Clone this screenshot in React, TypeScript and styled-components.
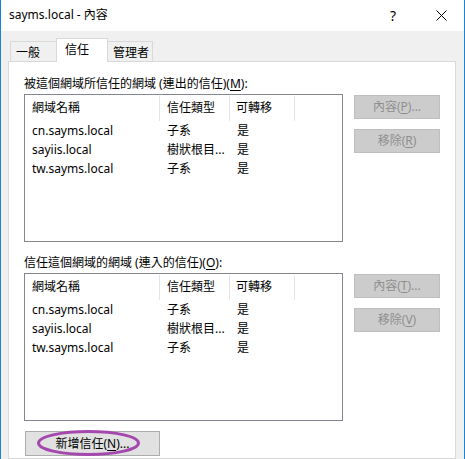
import React from "react";
import styled, { createGlobalStyle } from "styled-components";

const Global = createGlobalStyle`
  html, body { margin: 0; padding: 0; background: #ffffff; }
  body { font-family: "Noto Sans", "Noto Sans CJK TC", sans-serif; font-size: 12px; color: #000; }
  * { box-sizing: border-box; }
`;

const Window = styled.div`
  width: 465px;
  height: 459px;
  overflow: hidden;
  display: flex;
  flex-direction: column;
  border-left: 1px solid #1883d7;
  border-right: 1px solid #1883d7;
  background: #f0f0f0;
`;

const TitleBar = styled.div`
  height: 31px;
  flex: none;
  background: #ffffff;
  display: flex;
  align-items: center;
  padding-left: 8px;
`;

const TitleText = styled.div`
  flex: 1;
  font-size: 12px;
  line-height: 16px;
  margin-top: -1px;
`;

const TitleButton = styled.div<{ $w: number }>`
  width: ${(p) => p.$w}px;
  height: 31px;
  display: flex;
  align-items: center;
  justify-content: center;
  font-size: 14px;
  color: #000;
`;

const Body = styled.div`
  flex: 1;
  display: flex;
  flex-direction: column;
  padding: 8px 8px 0 7px;
`;

const TabRow = styled.div`
  display: flex;
  align-items: flex-end;
  height: 22px;
  padding-left: 2px;
`;

const Tab = styled.div<{ $w: number; $pad: number; $active?: boolean; $first?: boolean }>`
  width: ${(p) => p.$w}px;
  height: ${(p) => (p.$active ? 24 : 20)}px;
  margin-left: ${(p) => (p.$first ? 0 : -1)}px;
  margin-bottom: ${(p) => (p.$active ? -1 : 0)}px;
  padding-left: ${(p) => p.$pad}px;
  border: 1px solid #d9d9d9;
  border-bottom: none;
  background: ${(p) => (p.$active ? "#ffffff" : "#f0f0f0")};
  position: relative;
  z-index: ${(p) => (p.$active ? 2 : 1)};
  font-family: "Noto Sans CJK TC", sans-serif;
  font-size: 12px;
  line-height: ${(p) => (p.$active ? 19 : 20)}px;
  white-space: nowrap;
`;

const Panel = styled.div`
  flex: 1;
  background: #ffffff;
  border: 1px solid #d9d9d9;
  padding: 14px 0 0 15px;
  display: flex;
  flex-direction: column;
`;

const Section = styled.div<{ $gap?: number }>`
  display: flex;
  flex-direction: column;
  margin-top: ${(p) => p.$gap ?? 0}px;
`;

const Label = styled.div`
  line-height: 16px;
  height: 16px;
  margin-bottom: 2px;
  white-space: nowrap;
`;

const U = styled.span`
  text-decoration: underline;
  text-underline-offset: 2px;
`;

const SectionRow = styled.div`
  display: flex;
  align-items: flex-start;
  gap: 11px;
`;

const ListBox = styled.div`
  width: 319px;
  height: 148px;
  border: 1px solid #828790;
  background: #ffffff;
`;

const HeaderRow = styled.div`
  display: grid;
  grid-template-columns: 135px 70px 65px;
  height: 26px;
  padding-top: 1px;
`;

const HeaderCell = styled.div<{ $pad: number }>`
  padding-left: ${(p) => p.$pad}px;
  border-right: 1px solid #e5e5e5;
  line-height: 23px;
  height: 25px;
  white-space: nowrap;
`;

const DataRow = styled.div`
  display: grid;
  grid-template-columns: 135px 70px 65px;
  height: 19px;
`;

const Cell = styled.div<{ $pad: number }>`
  padding-left: ${(p) => p.$pad}px;
  line-height: 19px;
  white-space: nowrap;
  overflow: hidden;
`;

const Rows = styled.div`
  padding-top: 0px;
`;

const ButtonCol = styled.div`
  display: flex;
  flex-direction: column;
  gap: 10px;
  margin-top: 1px;
`;

const SideButton = styled.div`
  width: 86px;
  height: 24px;
  background: #cccccc;
  border: 1px solid #bfbfbf;
  color: #8f8f8f;
  display: flex;
  align-items: center;
  justify-content: center;
  line-height: 16px;
  white-space: nowrap;
`;

const AddButton = styled.div`
  position: relative;
  margin-top: 10px;
  margin-left: 1px;
  width: 135px;
  height: 25px;
  background: #e1e1e1;
  border: 1px solid #adadad;
  display: flex;
  align-items: center;
  justify-content: center;
  line-height: 16px;
  white-space: nowrap;
`;

const Ellipse = styled.svg`
  position: absolute;
  left: 10px;
  top: -3px;
  width: 105px;
  height: 29px;
  overflow: visible;
  pointer-events: none;
`;

type Row = { name: string; type: string; move: string };

const rows: Row[] = [
  { name: "cn.sayms.local", type: "子系", move: "是" },
  { name: "sayiis.local", type: "樹狀根目...", move: "是" },
  { name: "tw.sayms.local", type: "子系", move: "是" },
];

function TrustList() {
  return (
    <ListBox>
      <HeaderRow>
        <HeaderCell $pad={7}>網域名稱</HeaderCell>
        <HeaderCell $pad={7}>信任類型</HeaderCell>
        <HeaderCell $pad={6}>可轉移</HeaderCell>
      </HeaderRow>
      <Rows>
        {rows.map((r) => (
          <DataRow key={r.name}>
            <Cell $pad={7}>{r.name}</Cell>
            <Cell $pad={7}>{r.type}</Cell>
            <Cell $pad={7}>{r.move}</Cell>
          </DataRow>
        ))}
      </Rows>
    </ListBox>
  );
}

export default function App() {
  return (
    <>
      <Global />
      <Window>
        <TitleBar>
          <TitleText>sayms.local - 內容</TitleText>
          <TitleButton $w={50}>?</TitleButton>
          <TitleButton $w={46}>
            <svg width="11" height="11" viewBox="0 0 11 11">
              <path d="M0.5 0.5 L10.5 10.5 M10.5 0.5 L0.5 10.5" stroke="#000" strokeWidth="1" />
            </svg>
          </TitleButton>
        </TitleBar>
        <Body>
          <TabRow>
            <Tab $w={47} $pad={5} $first>一般</Tab>
            <Tab $w={52} $pad={8} $active>信任</Tab>
            <Tab $w={46} $pad={5}>管理者</Tab>
          </TabRow>
          <Panel>
            <Section>
              <Label>
                被這個網域所信任的網域 (連出的信任)(<U>M</U>):
              </Label>
              <SectionRow>
                <TrustList />
                <ButtonCol>
                  <SideButton>內容(<U>P</U>)...</SideButton>
                  <SideButton>移除(<U>R</U>)</SideButton>
                </ButtonCol>
              </SectionRow>
            </Section>
            <Section $gap={13}>
              <Label>
                信任這個網域的網域 (連入的信任)(<U>O</U>):
              </Label>
              <SectionRow>
                <TrustList />
                <ButtonCol>
                  <SideButton>內容(<U>T</U>)...</SideButton>
                  <SideButton>移除(<U>V</U>)</SideButton>
                </ButtonCol>
              </SectionRow>
            </Section>
            <AddButton>
              新增信任(<U>N</U>)...
              <Ellipse viewBox="0 0 105 29">
                <ellipse cx="52.5" cy="14" rx="50" ry="11.5" fill="none" stroke="#a548ae" strokeWidth="3" />
              </Ellipse>
            </AddButton>
          </Panel>
        </Body>
      </Window>
    </>
  );
}
